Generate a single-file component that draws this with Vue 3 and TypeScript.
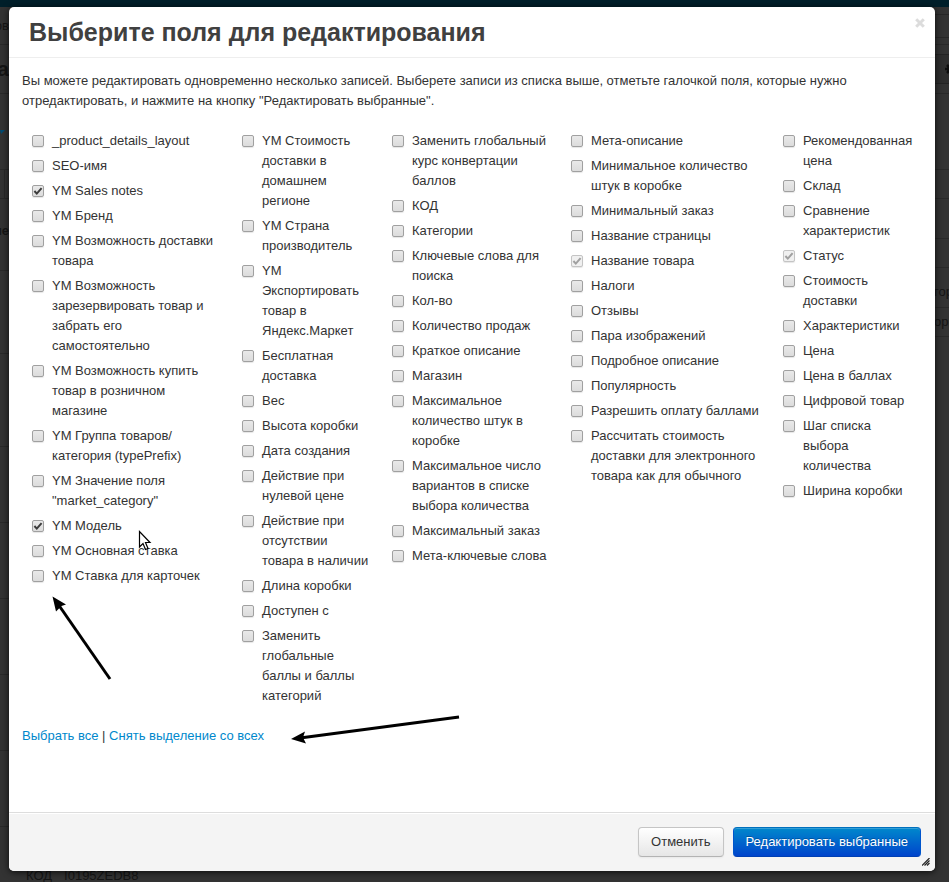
<script setup lang="ts">
import { ref } from 'vue'

interface Field {
  id: string
  label: string
  checked: boolean
  disabled: boolean
}

const checkedLabels = ['YM Sales notes', 'YM Модель', 'Название товара', 'Статус']
const lockedLabels = ['Название товара', 'Статус']

const names: string[][] = [
  [
    '_product_details_layout',
    'SEO-имя',
    'YM Sales notes',
    'YM Бренд',
    'YM Возможность доставки товара',
    'YM Возможность зарезервировать товар и забрать его самостоятельно',
    'YM Возможность купить товар в розничном магазине',
    'YM Группа товаров/ категория (typePrefix)',
    'YM Значение поля "market_category"',
    'YM Модель',
    'YM Основная ставка',
    'YM Ставка для карточек',
  ],
  [
    'YM Стоимость доставки в домашнем регионе',
    'YM Страна производитель',
    'YM Экспортировать товар в Яндекс.Маркет',
    'Бесплатная доставка',
    'Вес',
    'Высота коробки',
    'Дата создания',
    'Действие при нулевой цене',
    'Действие при отсутствии товара в наличии',
    'Длина коробки',
    'Доступен с',
    'Заменить глобальные баллы и баллы категорий',
  ],
  [
    'Заменить глобальный курс конвертации баллов',
    'КОД',
    'Категории',
    'Ключевые слова для поиска',
    'Кол-во',
    'Количество продаж',
    'Краткое описание',
    'Магазин',
    'Максимальное количество штук в коробке',
    'Максимальное число вариантов в списке выбора количества',
    'Максимальный заказ',
    'Мета-ключевые слова',
  ],
  [
    'Мета-описание',
    'Минимальное количество штук в коробке',
    'Минимальный заказ',
    'Название страницы',
    'Название товара',
    'Налоги',
    'Отзывы',
    'Пара изображений',
    'Подробное описание',
    'Популярность',
    'Разрешить оплату баллами',
    'Рассчитать стоимость доставки для электронного товара как для обычного',
  ],
  [
    'Рекомендованная цена',
    'Склад',
    'Сравнение характеристик',
    'Статус',
    'Стоимость доставки',
    'Характеристики',
    'Цена',
    'Цена в баллах',
    'Цифровой товар',
    'Шаг списка выбора количества',
    'Ширина коробки',
  ],
]

const columns = ref<Field[][]>(
  names.map((column, c) =>
    column.map((label, r) => ({
      id: `field-${c}-${r}`,
      label,
      checked: checkedLabels.includes(label),
      disabled: lockedLabels.includes(label),
    })),
  ),
)

function setAll(value: boolean): void {
  columns.value.flat().forEach((field) => {
    if (!field.disabled) field.checked = value
  })
}
</script>

<template>
  <div class="screen">
    <div class="backdrop" aria-hidden="true">
      <div class="topbar"></div>
      <div class="rails">
        <div class="rail rail-left">
          <div class="row h38"><span>ов</span></div>
          <div class="row h49"><b class="big">а</b></div>
          <div class="row h76 plain"><i class="caret"></i></div>
          <div class="row h29 cell"></div>
          <div class="row h72"><b class="high">не</b></div>
          <div class="row h83"></div>
          <div class="row h93"></div>
          <div class="row h76"></div>
          <div class="row h76"></div>
          <div class="row h76"></div>
          <div class="row h76"></div>
          <div class="row h76"></div>
        </div>
        <div class="rail rail-right">
          <div class="row h38"><i class="search"></i></div>
          <div class="row h49">
            <i class="tool">
              <svg viewBox="0 0 12 12" width="12" height="12">
                <path d="M6 0 V12 M0 6 H12 M2 2 L10 10 M10 2 L2 10" stroke="#0d0d0d" stroke-width="2.500" />
                <circle cx="6" cy="6" r="4" fill="#0d0d0d" />
              </svg>
            </i>
          </div>
          <div class="row h76"></div>
          <div class="row h29"></div>
          <div class="row h40"></div>
          <div class="row h29"></div>
          <div class="row h40"><span class="low">гор</span></div>
          <div class="row h29"><span>орг</span></div>
        </div>
      </div>
      <div class="code"><span>КОД</span><span>I0195ZEDB8</span></div>
    </div>

    <section class="modal" role="dialog" aria-labelledby="dialog-title">
      <header class="head">
        <h3 id="dialog-title">Выберите поля для редактирования</h3>
        <button class="close" type="button" aria-label="Закрыть">
          <svg viewBox="0 0 10 10" width="10" height="10">
            <path d="M1.200 1.200 L8.800 8.800 M8.800 1.200 L1.200 8.800" stroke="#dcdcdc" stroke-width="3" fill="none" />
          </svg>
        </button>
      </header>

      <div class="body">
        <p class="intro">
          Вы можете редактировать одновременно несколько записей. Выберете записи из списка выше,
          отметьте галочкой поля, которые нужно отредактировать, и нажмите на кнопку "Редактировать выбранные".
        </p>
        <div class="columns">
          <ul v-for="(column, c) in columns" :key="c" class="fields">
            <li v-for="field in column" :key="field.id" class="field">
              <input :id="field.id" v-model="field.checked" type="checkbox" :disabled="field.disabled" />
              <label :for="field.id">{{ field.label }}</label>
              <svg v-if="field.checked" class="tick" :class="{ dim: field.disabled }" viewBox="0 0 12 12">
                <path d="M2.400 6 L4.800 8.600 L9.600 3.200" />
              </svg>
            </li>
          </ul>
        </div>
        <p class="links">
          <a href="#all" @click.prevent="setAll(true)">Выбрать все</a> |
          <a href="#none" @click.prevent="setAll(false)">Снять выделение со всех</a>
        </p>
      </div>

      <footer class="foot">
        <button class="btn" type="button">Отменить</button>
        <button class="btn primary" type="button">Редактировать выбранные</button>
        <svg class="grip" viewBox="0 0 8 8" width="8" height="8" aria-hidden="true">
          <path d="M0 7.500 L7.500 0 M2.500 7.500 L7.500 2.500 M5 7.500 L7.500 5" stroke="#222" stroke-width="1.200" fill="none" />
        </svg>
      </footer>
    </section>

    <svg class="mark arrow-list" viewBox="0 0 62 86" width="62" height="86" aria-hidden="true">
      <path d="M7 8 L59 83" stroke="#000" stroke-width="3" fill="none" />
      <path d="M1.500 0.500 L15 8.500 L10.500 10 L9 11.500 L5 15.500 Z" />
    </svg>
    <svg class="mark arrow-links" viewBox="0 0 172 32" width="172" height="32" aria-hidden="true">
      <path d="M10 25 L169 4" stroke="#000" stroke-width="3" fill="none" />
      <path d="M1 26 L15 18.500 L13 24.500 L16 30.500 Z" />
    </svg>
    <svg class="mark pointer" viewBox="0 0 14 21" width="14" height="21" aria-hidden="true">
      <path d="M1.500 1.500 V17 L5 13.500 L7.500 19.500 L10 18.500 L7.500 12.500 H12 Z" fill="#fff" stroke="#000" stroke-width="1.200" />
    </svg>
  </div>
</template>

<style>
body {
  margin: 0;
  background: #333;
}
</style>

<style scoped>
.screen {
  position: relative;
  box-sizing: border-box;
  display: flex;
  min-height: 100vh;
  padding: 7px 14px 11px 9px;
  overflow: hidden;
  color: #333;
  font: 13px/20px "Liberation Sans", Arial, sans-serif;
}
.backdrop {
  position: absolute;
  inset: 0;
  display: flex;
  flex-direction: column;
  overflow: hidden;
  background: #333;
  color: #151515;
}
.topbar {
  flex: none;
  height: 7px;
  background: #001f2a;
}
.rails {
  flex: 1;
  display: flex;
  justify-content: space-between;
  min-height: 0;
}
.rail {
  overflow: hidden;
}
.rail-left {
  width: 9px;
}
.rail-right {
  width: 15px;
}
.row {
  box-sizing: border-box;
  display: flex;
  align-items: center;
  border-bottom: 1px solid #292929;
}
.rail-left .row {
  justify-content: flex-end;
}
.rail-left .plain {
  justify-content: flex-start;
}
.h29 { height: 29px; }
.h38 { height: 38px; }
.h40 { height: 40px; }
.h49 { height: 49px; }
.h72 { height: 72px; }
.h76 { height: 76px; }
.h83 { height: 83px; }
.h93 { height: 93px; }
.big {
  font-size: 21px;
}
.high {
  padding-bottom: 8px;
}
.low {
  padding-top: 8px;
}
.cell::after {
  content: "";
  height: 29px;
  width: 4px;
  border-left: 1px solid #292929;
}
.caret {
  border: 4px solid transparent;
  border-top-color: #004b72;
  border-bottom: 0;
  border-left-width: 1px;
}
.search {
  flex: 1;
  height: 22px;
  border: 1px solid #272727;
  border-right: 0;
}
.tool {
  flex: 1;
  display: flex;
  align-items: center;
  height: 28px;
  padding-left: 11px;
  border: 1px solid #242424;
  border-width: 1px 0;
  background: #2e2e2e;
}
.tool svg {
  flex: none;
}
.code {
  flex: none;
  display: flex;
  gap: 12px;
  height: 16px;
  padding-left: 26px;
}
.modal {
  position: relative;
  flex: 1;
  display: flex;
  flex-direction: column;
  min-width: 0;
  border-radius: 5px;
  background: #fff;
  box-shadow: 0 1px 7px rgba(0, 0, 0, 0.8);
}
.head {
  display: flex;
  align-items: flex-start;
  justify-content: space-between;
  padding: 5px 10px 5px 20px;
  border-bottom: 1px solid #eee;
}
h3 {
  margin: 0;
  color: #404040;
  font-size: 25px;
  line-height: 40px;
}
.close {
  display: flex;
  margin: 6px 0 0;
  padding: 0;
  border: 0;
  background: none;
}
.body {
  flex: 1;
  padding: 13px;
}
p {
  margin: 0;
}
.intro {
  padding-right: 40px;
}
.columns {
  display: grid;
  grid-template-columns: 188fr 128fr 157fr 190fr 136fr;
  gap: 22px;
  margin: 20px 3px 20px 10px;
}
.fields {
  display: flex;
  flex-direction: column;
  gap: 5px;
  min-width: 0;
  margin: 0;
  padding: 0;
  list-style: none;
}
.field {
  position: relative;
  display: flex;
  align-items: flex-start;
  gap: 8px;
}
.field input {
  flex: none;
  appearance: none;
  box-sizing: border-box;
  width: 12px;
  height: 12px;
  margin: 4px 0 0;
  border: 1px solid #a0a0a0;
  border-radius: 2px;
  background: linear-gradient(#e9e9e9, #dcdcdc);
  box-shadow: 0 1px 1px rgba(0, 0, 0, 0.1);
}
.field input:disabled {
  border-color: #c4c4c4;
  background: #f0f0f0;
}
.tick {
  position: absolute;
  top: 4px;
  left: 0;
  width: 12px;
  height: 12px;
  fill: none;
  stroke: #3c3c3c;
  stroke-width: 2;
  pointer-events: none;
}
.tick.dim {
  stroke: #a0a0a0;
}
a {
  color: #08c;
  text-decoration: none;
}
.foot {
  position: relative;
  display: flex;
  justify-content: flex-end;
  gap: 9px;
  padding: 14px;
  border-top: 1px solid #ddd;
  border-radius: 0 0 5px 5px;
  background: #f4f4f4;
  box-shadow: inset 0 1px 0 #fff;
}
.btn {
  padding: 4px 12px;
  border: 1px solid #c5c5c5;
  border-bottom-color: #b3b3b3;
  border-radius: 4px;
  background: linear-gradient(#fff, #e6e6e6);
  box-shadow: 0 1px 2px rgba(0, 0, 0, 0.05);
  color: #333;
  font: inherit;
}
.btn.primary {
  border-color: #0070bd #0055cc #003fb3;
  background: linear-gradient(#0088cc, #0044cc);
  box-shadow: inset 0 1px 0 rgba(255, 255, 255, 0.2);
  color: #fff;
  text-shadow: 0 -1px 0 rgba(0, 0, 0, 0.25);
}
.grip {
  position: absolute;
  right: 5px;
  bottom: 5px;
}
.mark {
  position: absolute;
  pointer-events: none;
}
.arrow-list {
  top: 596px;
  left: 51px;
}
.arrow-links {
  top: 713px;
  left: 290px;
}
.pointer {
  top: 530px;
  left: 138px;
}
</style>
